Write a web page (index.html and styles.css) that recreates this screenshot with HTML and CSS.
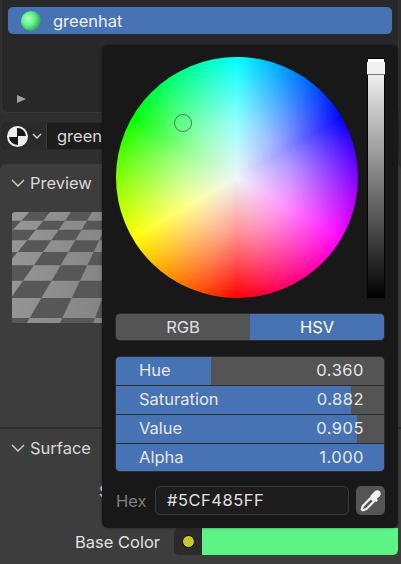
FILE: index.html
```html
<!DOCTYPE html>
<html lang="en">
<head>
  <meta charset="UTF-8">
  <title>Material color picker</title>
  <link rel="stylesheet" href="styles.css">
</head>
<body>
  <section class="slots">
    <div class="slot-row">
      <span class="sphere"></span>
      <span>greenhat</span>
    </div>
    <span class="slots-arrow"></span>
  </section>

  <div class="material-row">
    <button class="browse">
      <span class="browse-icon"></span>
      <svg class="chevron-small" viewBox="0 0 10 6"><path d="M1 1l4 4 4-4"/></svg>
    </button>
    <div class="material-name">greenhat</div>
  </div>

  <section class="panel panel-preview">
    <h2 class="panel-title">
      <svg class="chevron" viewBox="0 0 14 8"><path d="M1 1l6 6 6-6"/></svg>
      Preview
    </h2>
    <div class="preview-box">
      <svg class="checker" viewBox="12 12 270 333">
        <path d="M64 12H126L106 38H40ZM189 12H252L237 38H171ZM314 12H377L368 38H302Z"/>
        <path d="M-25 38H40L15 65H-53ZM106 38H171L152 65H84ZM237 38H302L289 65H221Z"/>
        <path d="M15 65H84L58 97H-14ZM152 65H221L202 97H130ZM289 65H358L346 97H274Z"/>
        <path d="M58 97H130L105 132H29ZM202 97H274L257 132H181Z"/>
        <path d="M-47 132H29L-3 172H-85ZM105 132H181L158 172H78ZM257 132H333L319 172H238Z"/>
        <path d="M-3 172H78L45 218H-40ZM158 172H238L216 218H131Z"/>
        <path d="M45 218H131L100 270H9ZM216 218H302L283 270H191Z"/>
        <path d="M100 270H191L163 330H65ZM283 270H374L359 330H261Z"/>
        <path d="M-33 330H65L24 400H-82ZM163 330H261L235 400H130Z"/>
      </svg>
    </div>
  </section>

  <section class="panel panel-surface">
    <h2 class="panel-title">
      <svg class="chevron" viewBox="0 0 14 8"><path d="M1 1l6 6 6-6"/></svg>
      Surface
    </h2>
    <div class="surface-label">S</div>
    <div class="color-row">
      <label class="color-label">Base Color</label>
      <span class="socket"><span class="socket-dot"></span></span>
      <span class="swatch"></span>
    </div>
  </section>

  <div class="popup">
    <div class="picker">
      <div class="wheel">
        <span class="wheel-cursor"></span>
      </div>
      <div class="value-bar">
        <span class="value-handle"></span>
      </div>
    </div>

    <div class="tabs">
      <div class="tab">RGB</div>
      <div class="tab tab-on">HSV</div>
    </div>

    <div class="sliders">
      <div class="slider">
        <span class="slider-fill" style="width: 35.6%"></span>
        <span class="slider-name">Hue</span>
        <span class="slider-num">0.360</span>
      </div>
      <div class="slider">
        <span class="slider-fill" style="width: 87.8%"></span>
        <span class="slider-name">Saturation</span>
        <span class="slider-num">0.882</span>
      </div>
      <div class="slider">
        <span class="slider-fill" style="width: 90%"></span>
        <span class="slider-name">Value</span>
        <span class="slider-num">0.905</span>
      </div>
      <div class="slider">
        <span class="slider-fill" style="width: 100%"></span>
        <span class="slider-name">Alpha</span>
        <span class="slider-num">1.000</span>
      </div>
    </div>

    <div class="hex-row">
      <label class="hex-label">Hex</label>
      <div class="hex-field">#5CF485FF</div>
      <button class="dropper">
        <svg viewBox="0 0 20 20">
          <path class="dropper-bulb" d="M10.800 4.400l2.400-2.500c1.100-1.100 3-1.100 4.100 0s1.100 3 0 4.100l-2.500 2.400 1 1-1.400 1.400-5-5 1.400-1.400z"/>
          <path class="dropper-tube" d="M9.800 7.400l2.800 2.800-6.800 6.800-2.700.8-.8-.8.800-2.700z"/>
        </svg>
      </button>
    </div>
  </div>
</body>
</html>
```

FILE: styles.css
```css
* {
  box-sizing: border-box;
}
body {
  margin: 0;
  width: 401px;
  height: 564px;
  overflow: hidden;
  position: relative;
  background: #2e2e2e;
  color: #e0e0e0;
  font-family: Inter, "Noto Sans", sans-serif;
  font-size: 16.5px;
}
button {
  font: inherit;
  color: inherit;
  border: none;
  padding: 0;
}

/* top list */
.slots {
  position: relative;
  height: 113px;
  width: 398px;
  margin-left: 1px;
  padding: 7px 6px 0 6px;
  background: #282828;
  border: 1px solid #363636;
  border-top: none;
  border-radius: 0 0 6px 6px;
}
.slot-row {
  display: flex;
  align-items: center;
  gap: 12px;
  height: 27px;
  padding-left: 13px;
  background: #4772b3;
  border-radius: 5px;
  color: #f0f0f0;
}
.sphere {
  width: 20px;
  height: 20px;
  border-radius: 50%;
  background: radial-gradient(circle at 36% 40%, #b4fcc8 0, #5cf485 38%, #3fa862 68%, #1f4f3a 100%);
}
.slots-arrow {
  position: absolute;
  left: 15px;
  top: 95px;
  border-left: 9px solid #a0a0a0;
  border-top: 4px solid transparent;
  border-bottom: 4px solid transparent;
}

/* material selector */
.material-row {
  display: flex;
  height: 28px;
  margin: 9px 0 0 1px;
  width: 398px;
  border-radius: 6px;
  background: #1d1d1d;
  overflow: hidden;
  border: 1px solid #2a2a2a;
}
.browse {
  display: flex;
  align-items: center;
  gap: 4px;
  width: 45px;
  padding-left: 5px;
  background: #2a2a2a;
  border-right: 1px solid #3a3a3a;
}
.browse-icon {
  width: 21px;
  height: 21px;
  flex: none;
  border-radius: 50%;
  border: 2px solid #ececec;
  background: conic-gradient(#161616 0 25%, #ececec 25% 50%, #161616 50% 75%, #ececec 75%);
}
.chevron-small {
  width: 10px;
  height: 6px;
  fill: none;
  stroke: #d6d6d6;
  stroke-width: 1.4;
}
.material-name {
  padding-left: 10px;
  line-height: 26px;
  color: #d8d8d8;
}

/* panels */
.panel {
  background: #3d3d3d;
}
.panel-preview {
  height: 265px;
  margin-top: 14px;
  border-radius: 6px 6px 0 0;
  border-bottom: 2px solid #2c2c2c;
}
.panel-title {
  display: flex;
  align-items: center;
  gap: 5px;
  margin: 0;
  padding: 9px 0 0 11px;
  font-size: 16.5px;
  font-weight: 400;
  line-height: 20px;
  color: #d8d8d8;
}
.chevron {
  width: 14px;
  height: 8px;
  fill: none;
  stroke: #d0d0d0;
  stroke-width: 1.4;
}
.preview-box {
  width: 90px;
  height: 111px;
  margin: 19px 0 0 12px;
  overflow: hidden;
  border-radius: 3px 0 0 3px;
  background: linear-gradient(100deg, #979797, #848484);
}
.checker {
  display: block;
  width: 90px;
  height: 111px;
  fill: #575757;
}
.panel-surface {
  height: 136px;
}
.surface-label {
  margin-top: 23px;
  padding-left: 99px;
  line-height: 20px;
  color: #d8d8d8;
}
.color-row {
  display: flex;
  align-items: center;
  height: 27px;
  margin-top: 27px;
}
.color-label {
  width: 160px;
  text-align: right;
  color: #e0e0e0;
}
.socket {
  display: flex;
  align-items: center;
  justify-content: center;
  width: 28px;
  height: 27px;
  margin-left: 14px;
  background: #2a2a2a;
  border-radius: 5px 0 0 5px;
}
.socket-dot {
  width: 13px;
  height: 13px;
  border-radius: 50%;
  background: #c7c729;
  border: 1px solid #111;
}
.swatch {
  width: 196px;
  height: 27px;
  background: #5cf485;
  border-radius: 0 0 5px 0;
}

/* color picker popup */
.popup {
  position: absolute;
  left: 102px;
  top: 45px;
  width: 296px;
  height: 483px;
  padding: 12px 13px 13px;
  background: #181818;
  border-radius: 6px;
  box-shadow: 0 0 3px rgba(0, 0, 0, .4);
}
.picker {
  display: flex;
  justify-content: space-between;
  height: 241px;
  padding-left: 1px;
}
.wheel {
  position: relative;
  width: 242px;
  height: 241px;
  border-radius: 50%;
  background:
    radial-gradient(closest-side, #eff6f8 0, rgba(255, 255, 255, .58) 45%, rgba(255, 255, 255, 0) 100%),
    conic-gradient(from 180deg, #f00, #ff0, #0f0, #0ff, #00f, #f0f, #f00);
}
.wheel-cursor {
  position: absolute;
  left: 58px;
  top: 57px;
  width: 18px;
  height: 18px;
  border-radius: 50%;
  border: 1px solid #4f7a5c;
}
.value-bar {
  position: relative;
  width: 18px;
  margin-top: 1px;
  background: linear-gradient(#fff, #000);
  border: 1px solid #000;
  border-width: 1px 1px 0;
}
.value-handle {
  position: absolute;
  left: -1px;
  right: -1px;
  top: 3px;
  height: 13px;
  background: #f0f0f0;
  border-bottom: 1px solid #777;
}
.tabs {
  display: flex;
  height: 28px;
  margin-top: 15px;
  border-radius: 5px;
  overflow: hidden;
  border: 1px solid #2c2c2c;
}
.tab {
  flex: 1;
  text-align: center;
  line-height: 26px;
  background: #545454;
  color: #e0e0e0;
}
.tab-on {
  background: #4772b3;
  color: #fff;
}
.sliders {
  margin-top: 15px;
  border-radius: 5px;
  overflow: hidden;
  border: 1px solid #2c2c2c;
}
.slider {
  position: relative;
  display: flex;
  justify-content: space-between;
  height: 29px;
  padding: 0 20px 0 23px;
  line-height: 27px;
  background: #545454;
  border-bottom: 1px solid #2c2c2c;
  color: #e6e6e6;
}
.slider:last-child {
  height: 27px;
  border-bottom: none;
}
.slider-fill {
  position: absolute;
  left: 0;
  top: 0;
  bottom: 0;
  background: #4772b3;
}
.slider-name, .slider-num {
  position: relative;
}
.slider-num {
  letter-spacing: .5px;
}
.hex-row {
  display: flex;
  align-items: center;
  height: 29px;
  margin-top: 14px;
}
.hex-label {
  width: 40px;
  padding-left: 1px;
  color: #7e7e7e;
}
.hex-field {
  width: 194px;
  height: 29px;
  padding-left: 11px;
  line-height: 27px;
  background: #1d1d1d;
  border: 1px solid #3a3a3a;
  border-radius: 5px;
  color: #e0e0e0;
  letter-spacing: .5px;
}
.dropper {
  display: flex;
  align-items: center;
  justify-content: center;
  width: 29px;
  height: 29px;
  margin-left: 7px;
  background: #545454;
  border-radius: 5px;
}
.dropper svg {
  width: 24px;
  height: 24px;
}
.dropper-bulb {
  fill: #f0f0f0;
}
.dropper-tube {
  fill: #545454;
  stroke: #f0f0f0;
  stroke-width: 1.800;
}
```
